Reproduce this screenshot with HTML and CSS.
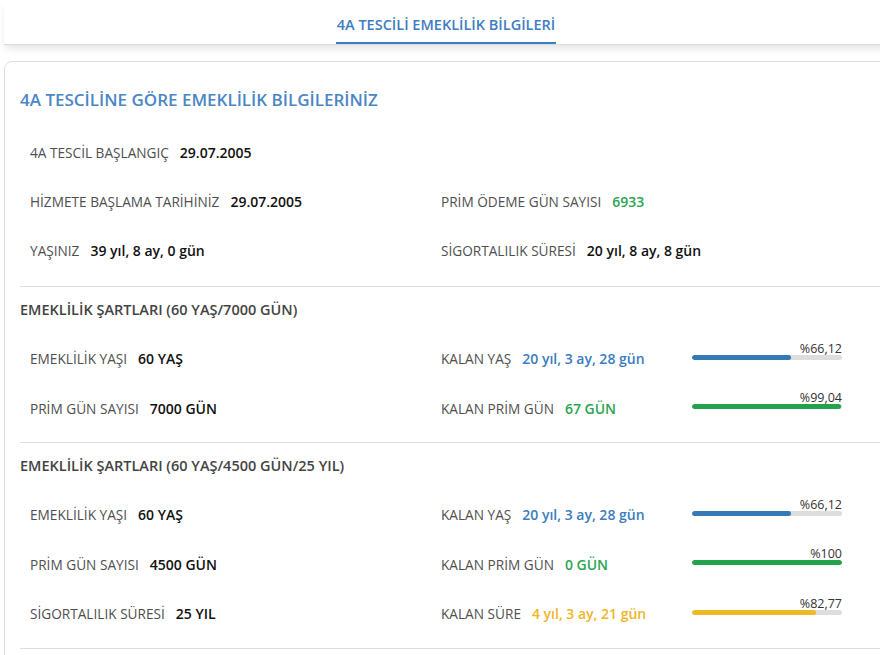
FILE: index.html
```html
<!DOCTYPE html>
<html lang="tr">
<head>
<meta charset="utf-8">
<title>4A Tescili Emeklilik Bilgileri</title>
<link rel="stylesheet" href="styles.css">
</head>
<body>
<div class="page">
  <nav class="tabs">
    <a class="tab active">4A TESCİLİ EMEKLİLİK BİLGİLERİ</a>
  </nav>
  <div class="card">
    <h1 class="title">4A TESCİLİNE GÖRE EMEKLİLİK BİLGİLERİNİZ</h1>
    <section class="block first">
      <div class="row">
        <div class="cell"><span class="lbl">4A TESCİL BAŞLANGIÇ</span><span class="val">29.07.2005</span></div>
        <div class="cell"></div>
      </div>
      <div class="row">
        <div class="cell"><span class="lbl">HİZMETE BAŞLAMA TARİHİNİZ</span><span class="val">29.07.2005</span></div>
        <div class="cell"><span class="lbl">PRİM ÖDEME GÜN SAYISI</span><span class="val green">6933</span></div>
      </div>
      <div class="row">
        <div class="cell"><span class="lbl">YAŞINIZ</span><span class="val">39 yıl, 8 ay, 0 gün</span></div>
        <div class="cell"><span class="lbl">SİGORTALILIK SÜRESİ</span><span class="val">20 yıl, 8 ay, 8 gün</span></div>
      </div>
    </section>
    <section class="block">
      <h2 class="subtitle">EMEKLİLİK ŞARTLARI (60 YAŞ/7000 GÜN)</h2>
      <div class="row">
        <div class="cell"><span class="lbl">EMEKLİLİK YAŞI</span><span class="val">60 YAŞ</span></div>
        <div class="cell split">
          <div class="pair"><span class="lbl">KALAN YAŞ</span><span class="val blue">20 yıl, 3 ay, 28 gün</span></div>
          <div class="meter"><div class="pct">%66,12</div><div class="track"><div class="fill blue-bg" style="width:66.12%"></div></div></div>
        </div>
      </div>
      <div class="row">
        <div class="cell"><span class="lbl">PRİM GÜN SAYISI</span><span class="val">7000 GÜN</span></div>
        <div class="cell split">
          <div class="pair"><span class="lbl">KALAN PRİM GÜN</span><span class="val green">67 GÜN</span></div>
          <div class="meter"><div class="pct">%99,04</div><div class="track"><div class="fill green-bg" style="width:99.04%"></div></div></div>
        </div>
      </div>
    </section>
    <section class="block last">
      <h2 class="subtitle">EMEKLİLİK ŞARTLARI (60 YAŞ/4500 GÜN/25 YIL)</h2>
      <div class="row">
        <div class="cell"><span class="lbl">EMEKLİLİK YAŞI</span><span class="val">60 YAŞ</span></div>
        <div class="cell split">
          <div class="pair"><span class="lbl">KALAN YAŞ</span><span class="val blue">20 yıl, 3 ay, 28 gün</span></div>
          <div class="meter"><div class="pct">%66,12</div><div class="track"><div class="fill blue-bg" style="width:66.12%"></div></div></div>
        </div>
      </div>
      <div class="row">
        <div class="cell"><span class="lbl">PRİM GÜN SAYISI</span><span class="val">4500 GÜN</span></div>
        <div class="cell split">
          <div class="pair"><span class="lbl">KALAN PRİM GÜN</span><span class="val green">0 GÜN</span></div>
          <div class="meter"><div class="pct">%100</div><div class="track"><div class="fill green-bg" style="width:100%"></div></div></div>
        </div>
      </div>
      <div class="row">
        <div class="cell"><span class="lbl">SİGORTALILIK SÜRESİ</span><span class="val">25 YIL</span></div>
        <div class="cell split">
          <div class="pair"><span class="lbl">KALAN SÜRE</span><span class="val yellow">4 yıl, 3 ay, 21 gün</span></div>
          <div class="meter"><div class="pct">%82,77</div><div class="track"><div class="fill yellow-bg" style="width:82.77%"></div></div></div>
        </div>
      </div>
    </section>
  </div>
</div>
</body>
</html>
```
FILE: styles.css
```css
html, body {
  margin: 0;
  padding: 0;
  background: #fff;
  overflow: hidden;
}
body {
  font-family: "Open Sans", "Noto Sans", "Liberation Sans", sans-serif;
  color: #333;
}
.page {
  width: 884px;
  padding-left: 4px;
}
.tabs {
  height: 44px;
  border-bottom: 1px solid #dcdcdc;
  box-shadow: 0 5px 8px -2px rgba(0, 0, 0, 0.12);
  display: flex;
  justify-content: center;
  position: relative;
  background: #fff;
}
.tab {
  display: block;
  height: 42px;
  line-height: 50px;
  font-size: 14.5px;
  font-weight: 600;
  color: #3e7dbf;
  border-bottom: 2px solid #3e7dbf;
  text-decoration: none;
  padding: 0 1px;
}
.card {
  margin-top: 16px;
  border: 1px solid #dedede;
  border-radius: 8px;
  padding: 26px 0 0 15px;
  height: 700px;
}
.title {
  margin: 0;
  font-size: 17px;
  line-height: 24px;
  font-weight: 600;
  color: #4a86c4;
}
.block {
  border-top: 1px solid #dedede;
  padding: 11px 0 9px;
}
.block.first {
  border-top: none;
  padding: 16px 0 11px;
}
.block.last {
  border-bottom: 1px solid #dedede;
}
.block.first .row {
  height: 49px;
}
.subtitle {
  margin: 0 0 12px;
  font-size: 14.5px;
  line-height: 24px;
  font-weight: 600;
  color: #444;
}
.row {
  display: grid;
  grid-template-columns: 411px 1fr;
  height: 49.5px;
  align-items: center;
  padding-left: 10px;
}
.cell {
  display: flex;
  align-items: center;
  font-size: 14px;
  white-space: nowrap;
}
.split {
  display: grid;
  grid-template-columns: 251px 150px;
  align-items: center;
}
.pair {
  display: flex;
  align-items: center;
}
.lbl {
  color: #4f4f4f;
  font-size: 13.65px;
  margin-right: 11px;
}
.val {
  font-weight: 600;
  color: #111;
}
.val.green { color: #2aa552; }
.val.blue { color: #3b7cc0; }
.val.yellow { color: #f0b429; }
.meter {
  width: 150px;
  margin-bottom: 16px;
}
.pct {
  text-align: right;
  font-size: 12.5px;
  line-height: 14px;
  color: #333;
}
.track {
  height: 5px;
  margin-top: -1px;
  background: #dddddd;
  border-radius: 3px;
  overflow: hidden;
}
.fill {
  height: 100%;
  border-radius: 3px;
}
.blue-bg { background: #337ab7; }
.green-bg { background: #22a24a; }
.yellow-bg { background: #f0bb22; }
```
